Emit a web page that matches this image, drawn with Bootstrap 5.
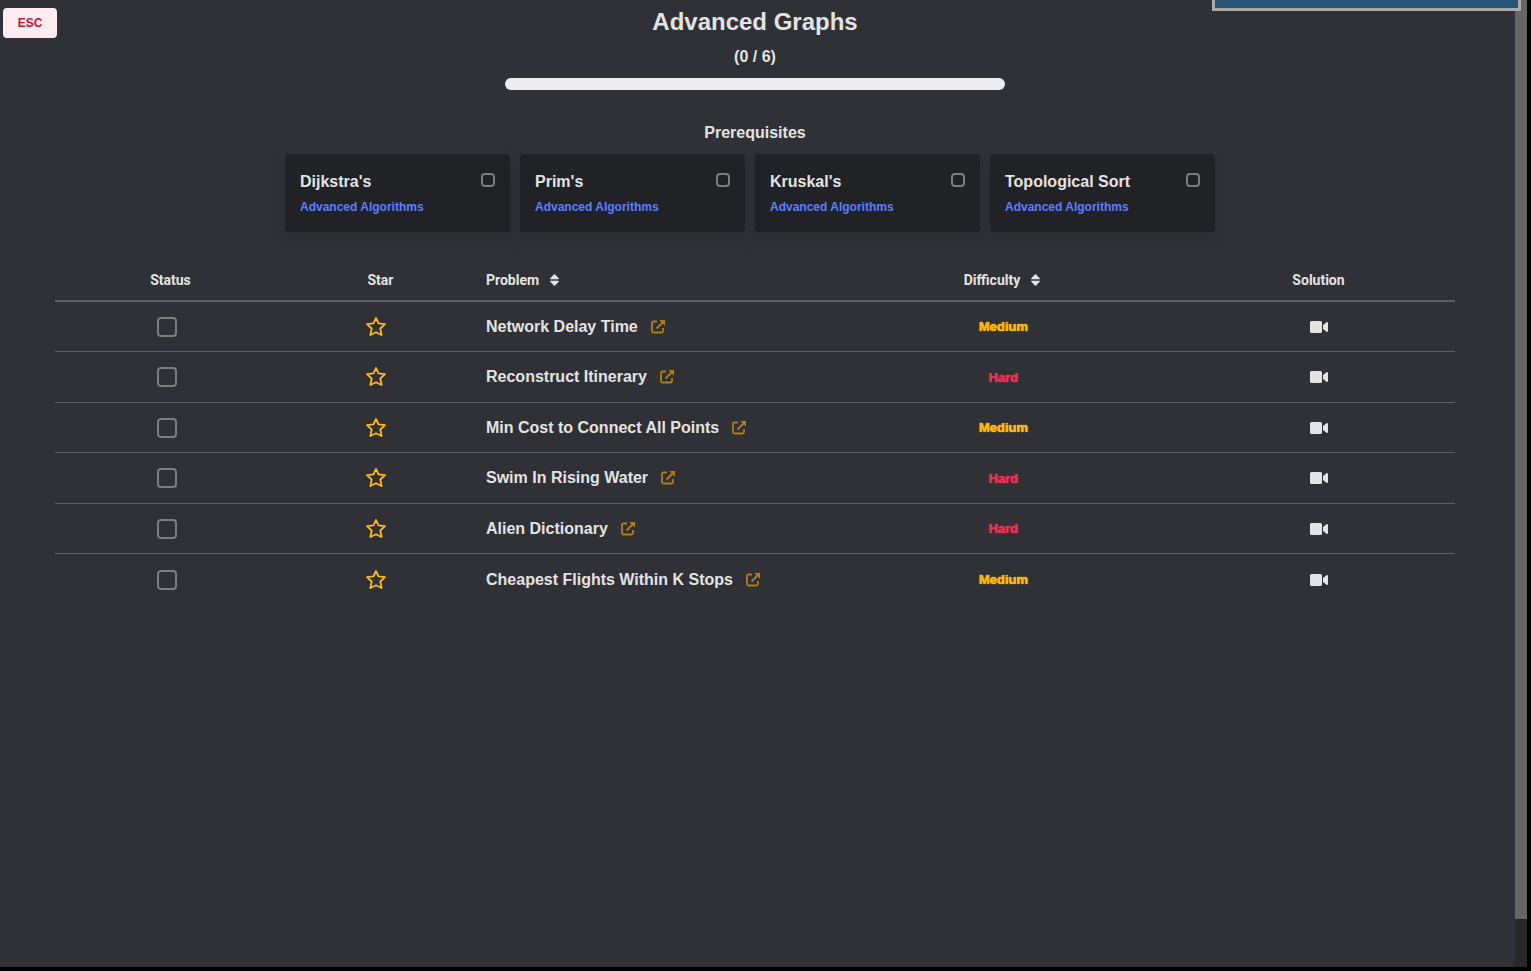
<!DOCTYPE html>
<html lang="en">
<head>
<meta charset="utf-8">
<meta name="viewport" content="width=device-width, initial-scale=1">
<title>Advanced Graphs</title>
<link href="https://cdn.jsdelivr.net/npm/bootstrap@5.3.0/dist/css/bootstrap.min.css" rel="stylesheet">
<style>
  body { background: #000; color: #e3e3e3; font-family: "Liberation Sans", Arial, sans-serif; font-weight: 700; }
  .viewport { padding: 0 4px 4px 0; }
  .page { background: #303136; padding-right: 5px; min-width: 0; }
  .scroll-track { width: 12px; background: #282828; }
  .scroll-thumb { height: 95%; background: #666; }
  .corner-panel { top: 0; right: 10px; width: 309px; height: 11px; background: #285577; border: 3px solid #a9a9a9; border-top: 0; }
  .esc-btn { top: 8px; left: 3px; width: 54px; height: 30px; padding: 0; background: #feecf0; color: #cc0f35; font-size: 12px; font-weight: 700; border: 0; border-radius: 4px; }
  .esc-btn:hover { background: #fde0e6; color: #cc0f35; }
  .page-title { font-size: 24px; line-height: 30px; padding-top: 7px; margin: 0; font-weight: 700; }
  .count { font-size: 16px; line-height: 24px; margin: 8px 0 9px; }
  .total-bar { width: 500px; height: 12px; border-radius: 6px; background: #ededed; }
  .section-title { font-size: 16px; line-height: 24px; font-weight: 700; margin: 31px 0 9px; }
  .prereq-list { padding-right: 10px; gap: 10px; }
  .prereq { width: 225px; height: 78px; padding: 16px 15px; background: #212226; border-radius: 4px; box-shadow: 0 8px 16px rgba(10,10,10,.1); }
  .prereq label { font-size: 16px; line-height: 24px; }
  .prereq a { font-size: 12px; line-height: 20px; margin-top: 3px; color: #5f7dff; text-decoration: none; }
  .prereq a:hover { text-decoration: underline; }
  .box { appearance: none; background: transparent; border: 2px solid #7d7d7d; border-radius: 4px; margin: 0; display: block; }
  .box:checked { background: #7d7d7d; }
  .box-sm { width: 14px; height: 14px; margin: 3px 0 0; }
  .box-lg { width: 20px; height: 20px; }
  .problems-wrap { padding: 26px 55px 0; }
  .problems { width: 100%; table-layout: fixed; border-collapse: separate; border-spacing: 0; }
  .problems th { font-family: Roboto, sans-serif; font-size: 14px; font-weight: 700; line-height: 24px; height: 44px; padding: 2px 11px 0; border-bottom: 2px solid #5f6062; }
  .problems td { height: 51px; padding: 0 11px; border-bottom: 1px solid #5f6062; font-size: 16px; line-height: 24px; }
  .problems tbody tr:nth-child(odd) td { height: 50px; }
  .problems tbody tr:last-child td { border-bottom: 0; }
  .problems a { color: inherit; text-decoration: none; }
  .problems a:hover { color: #fff; }
  .problems button { padding: 0; border: 0; background: none; color: inherit; font-weight: inherit; }
  .shift { padding-right: 8px; }
  .shift-star { padding-right: 10px; }
  .problems a.ext { color: #b07f12; margin-left: 13px; }
  .problems .star-btn { color: #ffb91a; }
  .level { font-size: 13px; text-shadow: 0 0 1px currentColor, 0 0 1px currentColor; }
  .level-medium { color: #ffb800; }
  .level-hard { color: #ee2f55; }
  svg { display: block; fill: currentColor; }
</style>
</head>
<body>
<svg width="0" height="0" class="position-absolute" aria-hidden="true">
  <symbol id="i-sort" viewBox="0 0 10 12"><path d="M1 5.2Q0 5.2.6 4.4L4.4.5Q5 0 5.6.5L9.400 4.400Q10 5.200 9 5.200ZM1 6.800Q0 6.800.6 7.600L4.400 11.500Q5 12 5.600 11.500L9.400 7.600Q10 6.800 9 6.800Z"/></symbol>
  <symbol id="i-star" viewBox="0 0 20 20"><path d="M10 1 12.500 6.400 19 7.200 14.300 11.500 15.600 18 10 15.200 4.400 18 5.700 11.500 1 7.200 7.500 6.400Z" fill="none" stroke="currentColor" stroke-width="1.800" stroke-linejoin="round"/></symbol>
  <symbol id="i-ext" viewBox="0 0 14 14"><path d="M6 1.500H2.500Q1 1.500 1 3V11Q1 12.500 2.500 12.500H10.500Q12 12.500 12 11V8M5.500 8.500 11.500 2.500" fill="none" stroke="currentColor" stroke-width="1.800"/><path d="M8.300 0H14V5.700Z"/></symbol>
  <symbol id="i-video" viewBox="0 0 18 12"><path d="M1.500 0H10.500Q12 0 12 1.500V10.500Q12 12 10.500 12H1.500Q0 12 0 10.500V1.500Q0 0 1.500 0ZM13 4 16.500 1.300Q18 .6 18 2V10Q18 11.400 16.500 10.700L13 8Z"/></symbol>
</svg>
<div class="viewport d-flex vh-100 position-relative">
  <main class="page flex-grow-1 position-relative text-center">
    <button type="button" class="btn esc-btn position-absolute">ESC</button>
    <h1 class="page-title">Advanced Graphs</h1>
    <p class="count">(0 / 6)</p>
    <div class="progress total-bar mx-auto" role="progressbar" aria-label="Solved" aria-valuenow="0" aria-valuemin="0" aria-valuemax="6"></div>
    <h2 class="section-title">Prerequisites</h2>
    <div class="prereq-list d-flex flex-wrap justify-content-center text-start" id="prereqs"></div>
    <div class="problems-wrap">
      <table class="problems">
        <colgroup><col style="width:16.500%"><col style="width:13.500%"><col style="width:25%"><col style="width:25.500%"><col style="width:19.500%"></colgroup>
        <thead>
          <tr>
            <th>Status</th>
            <th>Star</th>
            <th><button type="button" class="d-flex align-items-center">Problem<svg class="ms-2" width="15" height="12" aria-hidden="true"><use href="#i-sort"/></svg></button></th>
            <th><button type="button" class="d-flex align-items-center mx-auto">Difficulty<svg class="ms-2" width="15" height="12" aria-hidden="true"><use href="#i-sort"/></svg></button></th>
            <th>Solution</th>
          </tr>
        </thead>
        <tbody id="rows"></tbody>
      </table>
    </div>
  </main>
  <div class="scroll-track flex-shrink-0" aria-hidden="true"><div class="scroll-thumb"></div></div>
  <div class="corner-panel position-absolute"></div>
</div>
<script src="https://cdn.jsdelivr.net/npm/bootstrap@5.3.0/dist/js/bootstrap.bundle.min.js"></script>
<script>
  const prereqs = ["Dijkstra's", "Prim's", "Kruskal's", "Topological Sort"];
  const problems = [
    ["Network Delay Time", "Medium"],
    ["Reconstruct Itinerary", "Hard"],
    ["Min Cost to Connect All Points", "Medium"],
    ["Swim In Rising Water", "Hard"],
    ["Alien Dictionary", "Hard"],
    ["Cheapest Flights Within K Stops", "Medium"]
  ];
  document.getElementById("prereqs").innerHTML = prereqs.map((name, i) => `
    <div class="prereq">
      <div class="d-flex justify-content-between align-items-start">
        <label for="pre${i}">${name}</label>
        <input class="box box-sm" type="checkbox" id="pre${i}">
      </div>
      <a class="d-block" href="#">Advanced Algorithms</a>
    </div>`).join("");
  document.getElementById("rows").innerHTML = problems.map(([name, level]) => `
    <tr>
      <td><div class="shift"><input class="box box-lg mx-auto" type="checkbox" aria-label="${name} done"></div></td>
      <td><div class="shift-star"><button type="button" class="star-btn d-block mx-auto" aria-label="Star ${name}"><svg width="20" height="20"><use href="#i-star"/></svg></button></div></td>
      <td><div class="d-flex align-items-center text-nowrap"><a href="#">${name}</a><a class="ext" href="#" aria-label="Open ${name}"><svg width="14" height="14"><use href="#i-ext"/></svg></a></div></td>
      <td><span class="level level-${level.toLowerCase()}">${level}</span></td>
      <td><button type="button" class="d-block mx-auto" aria-label="Video for ${name}"><svg width="18" height="12"><use href="#i-video"/></svg></button></td>
    </tr>`).join("");
</script>
</body>
</html>
